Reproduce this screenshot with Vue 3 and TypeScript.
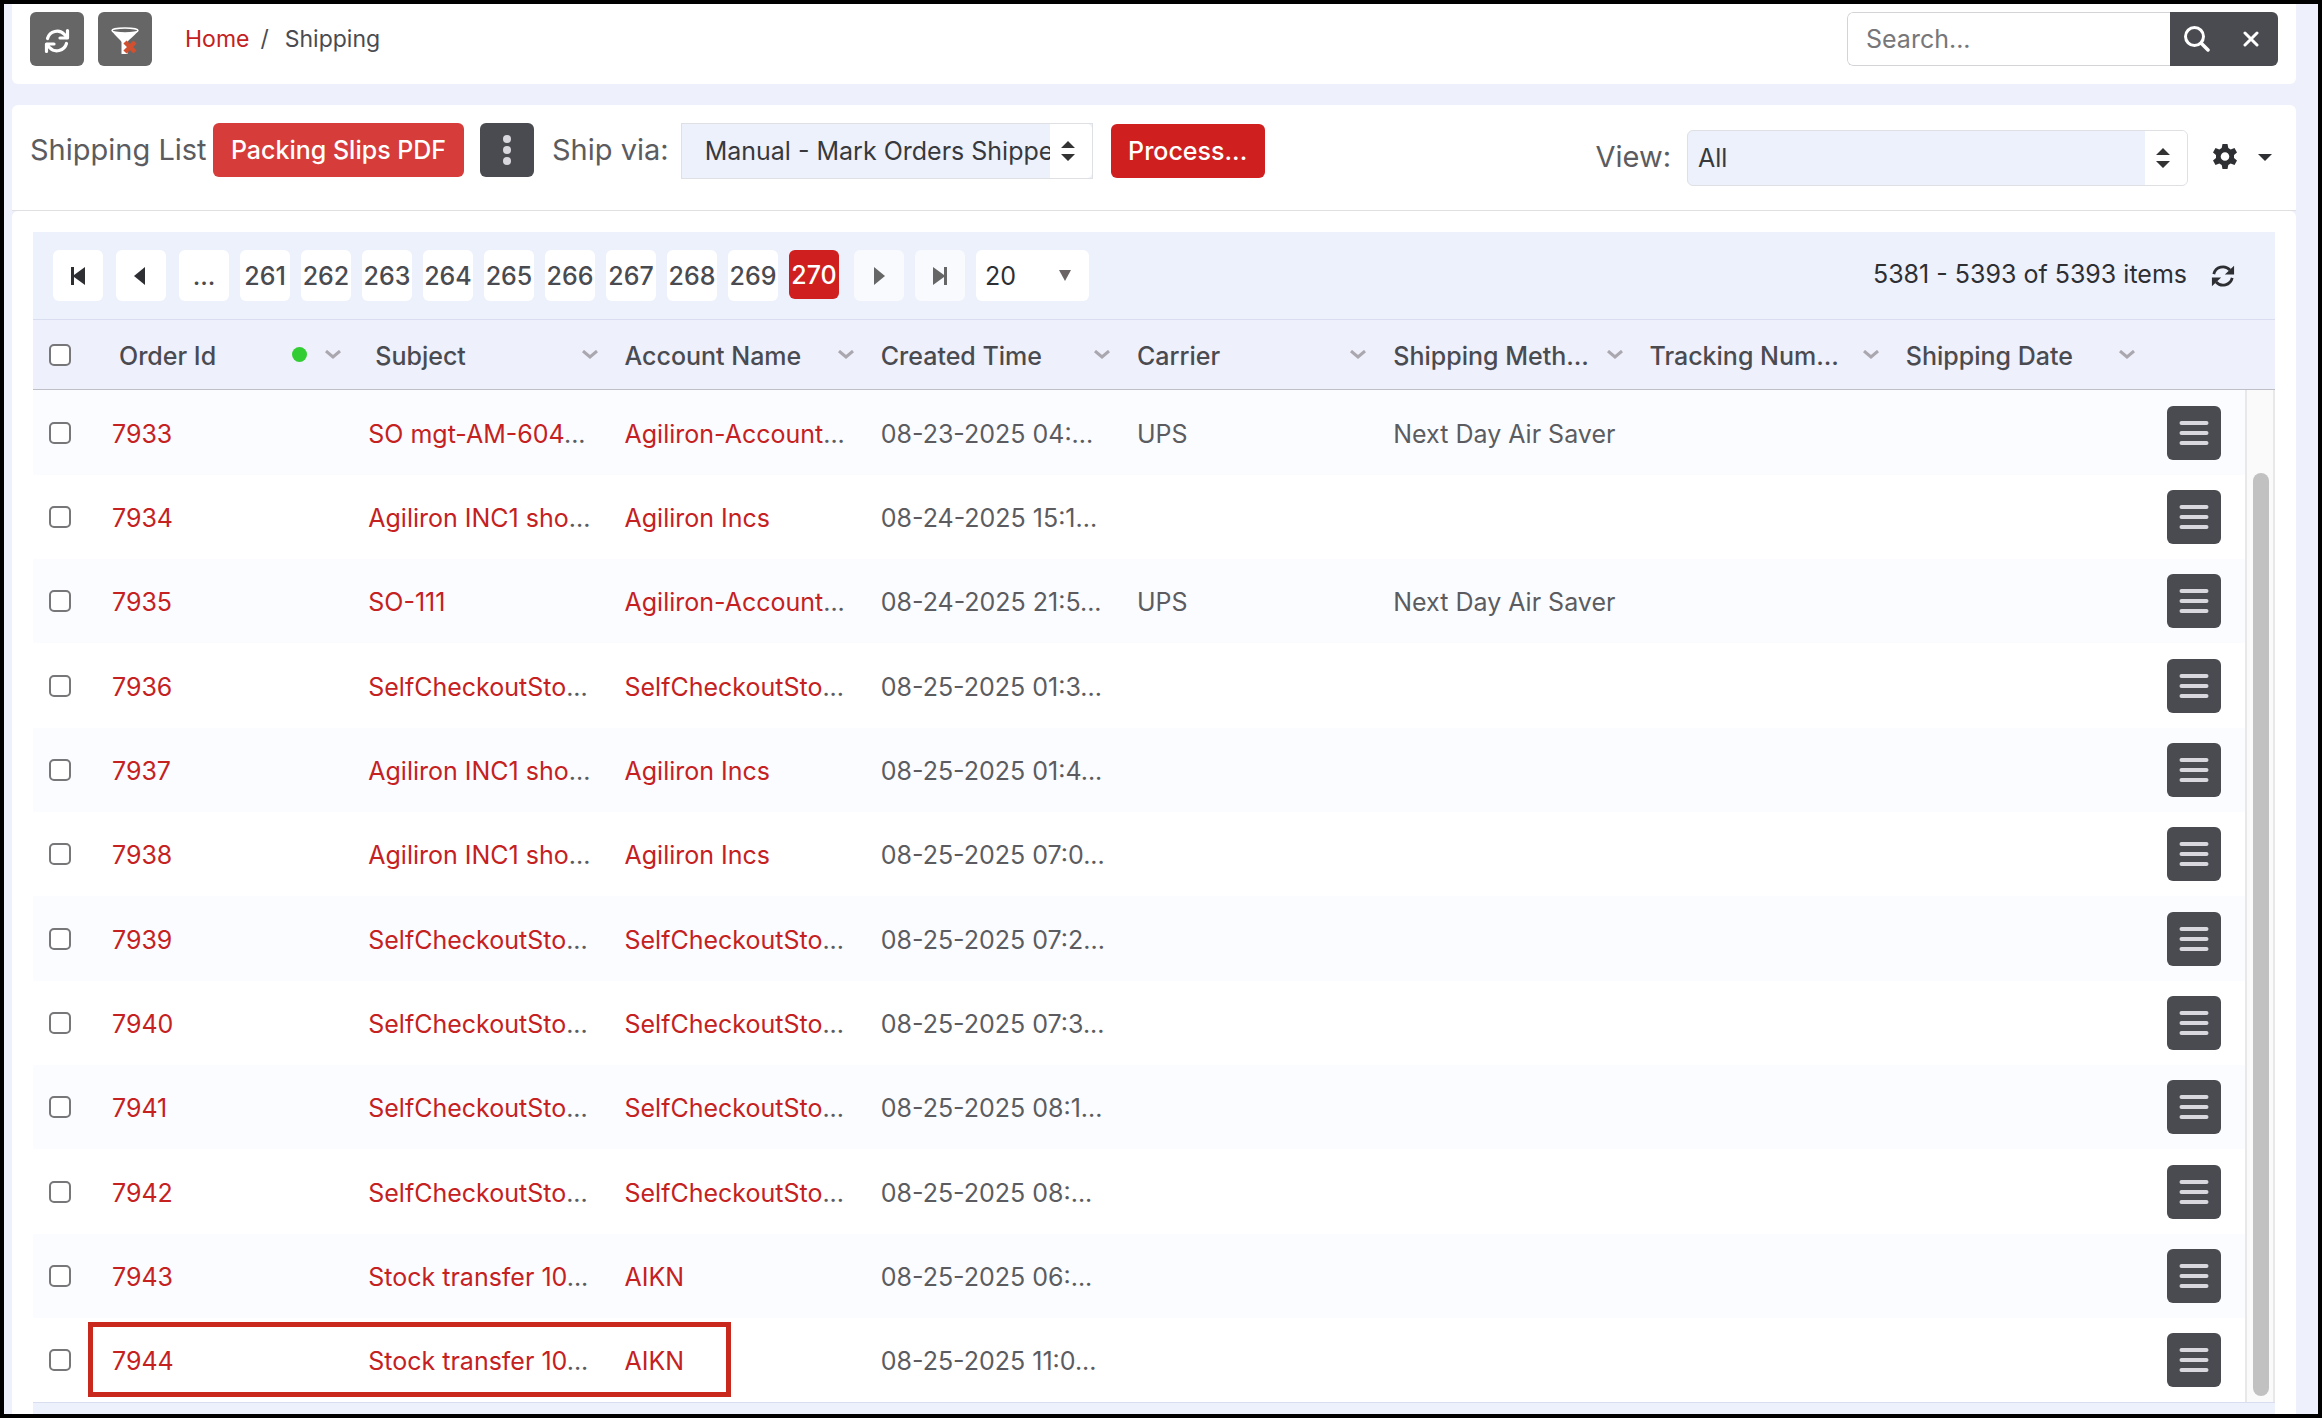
<script setup lang="ts">
interface Column {
  label: string
  sorted?: boolean
  inset?: boolean
}

interface Order {
  id: string
  subject: string
  account: string
  accountCut?: boolean
  subjectFull?: boolean
  created: string
  carrier?: string
  method?: string
  flagged?: boolean
}

const columns: Column[] = [
  { label: 'Order Id', sorted: true, inset: true },
  { label: 'Subject', inset: true },
  { label: 'Account Name' },
  { label: 'Created Time' },
  { label: 'Carrier' },
  { label: 'Shipping Meth...' },
  { label: 'Tracking Num...' },
  { label: 'Shipping Date' },
]

const pages: string[] = ['...', '261', '262', '263', '264', '265', '266', '267', '268', '269', '270']

const orders: Order[] = [
  { id: '7933', subject: 'SO mgt-AM-604', account: 'Agiliron-Account', accountCut: true, created: '08-23-2025 04:...', carrier: 'UPS', method: 'Next Day Air Saver' },
  { id: '7934', subject: 'Agiliron INC1 sho', account: 'Agiliron Incs', created: '08-24-2025 15:1...' },
  { id: '7935', subject: 'SO-111', subjectFull: true, account: 'Agiliron-Account', accountCut: true, created: '08-24-2025 21:5...', carrier: 'UPS', method: 'Next Day Air Saver' },
  { id: '7936', subject: 'SelfCheckoutSto', account: 'SelfCheckoutSto', accountCut: true, created: '08-25-2025 01:3...' },
  { id: '7937', subject: 'Agiliron INC1 sho', account: 'Agiliron Incs', created: '08-25-2025 01:4...' },
  { id: '7938', subject: 'Agiliron INC1 sho', account: 'Agiliron Incs', created: '08-25-2025 07:0...' },
  { id: '7939', subject: 'SelfCheckoutSto', account: 'SelfCheckoutSto', accountCut: true, created: '08-25-2025 07:2...' },
  { id: '7940', subject: 'SelfCheckoutSto', account: 'SelfCheckoutSto', accountCut: true, created: '08-25-2025 07:3...' },
  { id: '7941', subject: 'SelfCheckoutSto', account: 'SelfCheckoutSto', accountCut: true, created: '08-25-2025 08:1...' },
  { id: '7942', subject: 'SelfCheckoutSto', account: 'SelfCheckoutSto', accountCut: true, created: '08-25-2025 08:...' },
  { id: '7943', subject: 'Stock transfer 10', account: 'AIKN', created: '08-25-2025 06:...' },
  { id: '7944', subject: 'Stock transfer 10', account: 'AIKN', created: '08-25-2025 11:0...', flagged: true },
]
</script>

<template>
  <div class="frame">
    <header class="topbar">
      <button class="square grey" type="button" aria-label="Refresh">
        <svg width="26" height="26" viewBox="0 0 26 26" fill="none" stroke="#fff" stroke-width="3.200" stroke-linecap="round" stroke-linejoin="round">
          <path d="M3.500 10.500A10 10 0 0 1 20.500 6.500L23 9.500M22.500 15.500A10 10 0 0 1 5.500 19.500L3 16.500" />
          <path d="M23.500 2.500v7.500h-7.500M2.500 23.500V16H10" />
        </svg>
      </button>
      <button class="square grey" type="button" aria-label="Clear filter">
        <svg width="28" height="28" viewBox="0 0 28 28">
          <path d="M1 3.500C1 6 10 13 10.500 15v12h6V15C17 13 27 6 27 3.500z" fill="#fff" />
          <ellipse cx="14" cy="3.500" rx="13" ry="2.500" fill="#666" stroke="#fff" stroke-width="1.500" />
          <path d="M14 15l10 10M24 15l-10 10" stroke="#d0502f" stroke-width="4.500" />
        </svg>
      </button>
      <nav class="crumbs" aria-label="Breadcrumb">
        <a href="#">Home</a><span class="slash">/</span><span>Shipping</span>
      </nav>
      <form class="search" @submit.prevent>
        <input type="text" placeholder="Search..." aria-label="Search" />
        <button type="submit" aria-label="Search">
          <svg width="26" height="26" viewBox="0 0 26 26" fill="none" stroke="#fff" stroke-width="3" stroke-linecap="round">
            <circle cx="10.500" cy="10.500" r="9" />
            <path d="M17.500 17.500l6.500 6.500" stroke-width="3.500" />
          </svg>
        </button>
        <button type="button" aria-label="Clear">
          <svg width="16" height="16" viewBox="0 0 16 16" stroke="#fff" stroke-width="3" stroke-linecap="round">
            <path d="M2 2l12 12M14 2L2 14" />
          </svg>
        </button>
      </form>
    </header>

    <section class="tools">
      <h1>Shipping List</h1>
      <button class="action light" type="button">Packing Slips PDF</button>
      <button class="square dark dots" type="button" aria-label="More actions">
        <svg width="8" height="30" viewBox="0 0 8 30" fill="#d8d8de">
          <circle cx="4" cy="4" r="4" /><circle cx="4" cy="15" r="4" /><circle cx="4" cy="26" r="4" />
        </svg>
      </button>
      <label class="caption" for="ship-via">Ship via:</label>
      <div class="picker via">
        <select id="ship-via"><option>Manual - Mark Orders Shipped</option></select>
        <span class="arrows"><svg width="14" height="20" viewBox="0 0 14 20" fill="#333"><path d="M0 7l7-7 7 7zM0 13h14l-7 7z" /></svg></span>
      </div>
      <button class="action process" type="button">Process...</button>
      <div class="view">
        <label class="caption" for="view">View:</label>
        <div class="picker all">
          <select id="view"><option>All</option></select>
          <span class="arrows"><svg width="14" height="20" viewBox="0 0 14 20" fill="#333"><path d="M0 7l7-7 7 7zM0 13h14l-7 7z" /></svg></span>
        </div>
        <button class="gear" type="button" aria-label="Settings">
          <svg width="26" height="28" viewBox="0 0 26 28" fill="#2e2f33">
            <path fill-rule="evenodd" d="M10.500 1h5l.8 4 2.400 1.400 3.800-1.300 2.500 4.300-3 2.700v2.800l3 2.700-2.500 4.300-3.800-1.300-2.400 1.400-.8 4h-5l-.8-4-2.400-1.400-3.800 1.300L1 17.600l3-2.700v-2.800L1 9.400l2.500-4.300 3.800 1.300L9.700 5zM13 9.200a4.300 4.300 0 1 0 0 8.600 4.300 4.300 0 0 0 0-8.600z" />
          </svg>
          <svg width="14" height="7" viewBox="0 0 14 7" fill="#2e2f33"><path d="M0 0h14L7 7z" /></svg>
        </button>
      </div>
    </section>

    <main class="panel">
      <div class="grid">
        <div class="pager">
          <button class="page step" type="button" aria-label="First page">
            <svg width="14" height="18" viewBox="0 0 14 18" fill="#2e2f33"><path d="M0 0h3v8L14 0v18L3 10v8H0z" /></svg>
          </button>
          <button class="page step" type="button" aria-label="Previous page">
            <svg width="14" height="18" viewBox="0 0 14 18" fill="#2e2f33"><path d="M11 0v18L0 9z" /></svg>
          </button>
          <button v-for="page in pages" :key="page" class="page" :class="{ current: page === '270' }" type="button">{{ page }}</button>
          <button class="page idle" type="button" aria-label="Next page">
            <svg width="11" height="18" viewBox="0 0 11 18" fill="#666"><path d="M0 0v18l11-9z" /></svg>
          </button>
          <button class="page idle" type="button" aria-label="Last page">
            <svg width="14" height="18" viewBox="0 0 14 18" fill="#666"><path d="M14 0h-3v8L0 0v18l11-8v8h3z" /></svg>
          </button>
          <div class="size">
            <select aria-label="Items per page"><option>20</option></select>
            <svg width="12" height="11" viewBox="0 0 12 11" fill="#6b6464"><path d="M0 0h12L6 11z" /></svg>
          </div>
          <span class="count">5381 - 5393 of 5393 items</span>
          <button class="reload" type="button" aria-label="Reload">
            <svg width="24" height="24" viewBox="0 0 26 26" fill="none" stroke="#2e2f33" stroke-width="3">
              <path d="M3 11A10.200 10.200 0 0 1 20.500 6.500M23 15A10.200 10.200 0 0 1 5.500 19.500" />
              <path d="M25 2v9.500H15zM1 24v-9.500H11z" fill="#2e2f33" stroke="none" />
            </svg>
          </button>
        </div>

        <div class="body">
          <table>
            <colgroup>
              <col class="tick-col" />
              <col v-for="column in columns" :key="column.label" />
              <col class="menu-col" />
            </colgroup>
            <thead>
              <tr>
                <th class="tick"><input type="checkbox" aria-label="Select all" /></th>
                <th v-for="column in columns" :key="column.label" :class="{ inset: column.inset }">
                  <div class="head">
                    <span class="title">{{ column.label }}</span>
                    <i v-if="column.sorted" class="dot"></i>
                    <svg width="16" height="9" viewBox="0 0 16 9" fill="none" stroke="#aaa7ae" stroke-width="3"><path d="M1 1l7 6 7-6" /></svg>
                  </div>
                </th>
                <th></th>
              </tr>
            </thead>
            <tbody>
              <tr v-for="order in orders" :key="order.id">
                <td class="tick"><input type="checkbox" :aria-label="'Select order ' + order.id" /></td>
                <td class="text order"><i v-if="order.flagged" class="mark"></i><a href="#">{{ order.id }}</a></td>
                <td class="text"><a href="#">{{ order.subject }}</a><template v-if="!order.subjectFull">...</template></td>
                <td class="text"><a href="#">{{ order.account }}</a><template v-if="order.accountCut">...</template></td>
                <td class="text">{{ order.created }}</td>
                <td class="text">{{ order.carrier }}</td>
                <td class="text">{{ order.method }}</td>
                <td></td>
                <td></td>
                <td class="menu">
                  <button class="square dark" type="button" aria-label="Row actions">
                    <svg width="30" height="26" viewBox="0 0 30 26" stroke="#d8d8de" stroke-width="4" stroke-linecap="round"><path d="M2.500 3h25M2.500 13h25M2.500 23h25" /></svg>
                  </button>
                </td>
              </tr>
            </tbody>
          </table>
          <div class="scroll">
            <div class="corner"></div>
            <div class="track"><div class="thumb"></div></div>
          </div>
        </div>
        <div class="foot"></div>
      </div>
    </main>
  </div>
</template>

<style>
body {
  margin: 0;
  background: #eef0fc;
}
</style>

<style scoped>
.frame {
  box-sizing: border-box;
  min-height: 100vh;
  border: 4px solid #000;
  padding: 0 22px 0 8px;
  display: flex;
  flex-direction: column;
  background: #eef0fc;
  color: #5c5c60;
  font: 25px/32px Inter, "Liberation Sans", sans-serif;
}
button, input, select {
  box-sizing: border-box;
  font: inherit;
  color: inherit;
}
button {
  display: flex;
  align-items: center;
  justify-content: center;
  margin: 0;
  padding: 0;
  border: 0;
  flex: none;
}
svg { display: block; flex: none; }
a { color: #c4211f; text-decoration: none; }

.square { width: 54px; height: 54px; border-radius: 6px; }
.grey { padding-top: 4px; background: #666; }
.dark { background: #4a4b50; }

.topbar {
  display: flex;
  align-items: flex-start;
  gap: 14px;
  height: 80px;
  box-sizing: border-box;
  padding: 8px 18px 0;
  background: #fff;
  border-radius: 0 0 6px 6px;
}
.crumbs { display: flex; margin-left: 19px; font-size: 23px; line-height: 54px; color: #4a4b50; }
.slash { margin: 0 16px 0 11px; }
.search { display: flex; margin-left: auto; border-radius: 6px; overflow: hidden; }
.search input {
  width: 323px;
  height: 54px;
  padding: 0 18px;
  border: 1px solid #d4d4d8;
  border-right: 0;
  border-radius: 6px 0 0 6px;
  background: #fff;
  outline: 0;
}
.search input::placeholder { color: #77777a; opacity: 1; }
.search button { width: 54px; height: 54px; background: #4a4b50; }

.tools {
  display: flex;
  align-items: flex-start;
  box-sizing: border-box;
  height: 106px;
  margin-top: 21px;
  padding: 18px 18px 0;
  background: #fff;
  border-bottom: 1px solid #e0e0e3;
  border-radius: 6px 6px 0 0;
}
h1 {
  width: 183px;
  margin: 0;
  font-size: 29px;
  font-weight: 400;
  line-height: 54px;
  white-space: nowrap;
}
.caption { font-size: 29px; line-height: 54px; white-space: nowrap; }
.action { height: 54px; border-radius: 6px; color: #fff; font-weight: 500; white-space: nowrap; }
.light { width: 251px; background: #d63c39; }
.process { width: 154px; margin: 1px 0 0 18px; background: #cf201f; }
.dots { margin: 0 18px 0 16px; }
.picker { position: relative; }
.picker select {
  display: block;
  width: 100%;
  height: 56px;
  appearance: none;
  background: #edf1fb;
  border: 1px solid #dfe0e4;
  color: #38393d;
  outline: 0;
}
.via { width: 412px; margin-left: 12px; }
.via select { padding: 0 0 0 23px; }
.arrows {
  position: absolute;
  top: 1px;
  right: 1px;
  bottom: 1px;
  width: 42px;
  display: flex;
  align-items: center;
  justify-content: center;
  padding-right: 6px;
  box-sizing: border-box;
  background: #fff;
  pointer-events: none;
  border-radius: 0 5px 5px 0;
}
.view { display: flex; margin: 7px 0 0 auto; }
.all { width: 501px; margin-left: 16px; }
.all select { padding: 0 0 0 10px; border-radius: 6px; }
.gear { height: 54px; gap: 20px; margin: 0 6px 0 24px; background: none; }

.panel {
  flex: 1;
  padding: 21px 21px 0;
  background: #fff;
  border-radius: 6px 6px 0 0;
}
.pager {
  display: flex;
  align-items: flex-start;
  gap: 11px;
  box-sizing: border-box;
  height: 88px;
  padding: 18px 40px 0 20px;
  background: #edf1fb;
  border-bottom: 1px solid #d8ddf0;
}
.page {
  width: 50px;
  height: 51px;
  border-radius: 6px;
  background: #fff;
  color: #4a4b50;
  font-weight: 500;
}
.step { margin-right: 2px; }
.current { height: 49px; margin-right: 4px; background: #cf201f; color: #fff; }
.idle { background: #f9fafe; }
.size { position: relative; width: 113px; }
.size select {
  display: block;
  width: 100%;
  height: 51px;
  padding: 0 0 0 9px;
  appearance: none;
  border: 0;
  border-radius: 6px;
  background: #fff;
  color: #2e2f33;
}
.size svg { position: absolute; right: 18px; top: 20px; pointer-events: none; }
.count { margin-left: auto; line-height: 48px; color: #2e2f33; white-space: nowrap; }
.reload { height: 51px; margin-left: 13px; background: none; }

.body { display: flex; }
table {
  flex: 1;
  min-width: 0;
  width: 100%;
  table-layout: fixed;
  border-collapse: separate;
  border-spacing: 0;
}
.tick-col { width: 65px; }
.menu-col { width: 97px; }
th, td {
  box-sizing: border-box;
  padding: 0 0 0 14px;
  text-align: left;
  white-space: nowrap;
}
th {
  height: 70px;
  background: #eef0fc;
  border-bottom: 1px solid #bfbfc8;
  color: #4a4b50;
  font-weight: 500;
}
th.inset { padding-left: 21px; }
td { height: 84px; }
td.text { padding-top: 2px; }
tbody tr:nth-child(3n + 1) td { height: 85px; }
tbody tr:nth-child(odd) { background: #fbfcff; }
.head { display: flex; align-items: center; padding-right: 13px; }
.title { flex: 1; padding-top: 2px; }
.dot { width: 15px; height: 15px; margin-right: 18px; border-radius: 50%; background: #32cd32; }
.tick { padding-left: 16px; }
.tick input {
  display: block;
  width: 22px;
  height: 22px;
  margin: 0;
  appearance: none;
  background: #fff;
  border: 2px solid #77777a;
  border-radius: 5px;
}
.order { position: relative; }
.mark {
  position: absolute;
  top: 4px;
  bottom: 5px;
  left: -10px;
  width: 251%;
  box-sizing: border-box;
  border: 5px solid #c9281c;
  pointer-events: none;
}
td.menu { padding-left: 19px; }
.scroll { display: flex; flex-direction: column; width: 30px; flex: none; }
.corner { height: 70px; box-sizing: border-box; background: #eef0fc; border-bottom: 1px solid #bfbfc8; }
.track {
  flex: 1;
  display: flex;
  padding: 83px 4px 6px 6px;
  background: #fafafa;
  border: solid #e8e8e8;
  border-width: 0 2px;
}
.thumb { flex: 1; border-radius: 8px; background: #c1c1c1; }
.foot { height: 12px; box-sizing: border-box; background: #edf1fb; border-top: 1px solid #d8ddf0; }
</style>
